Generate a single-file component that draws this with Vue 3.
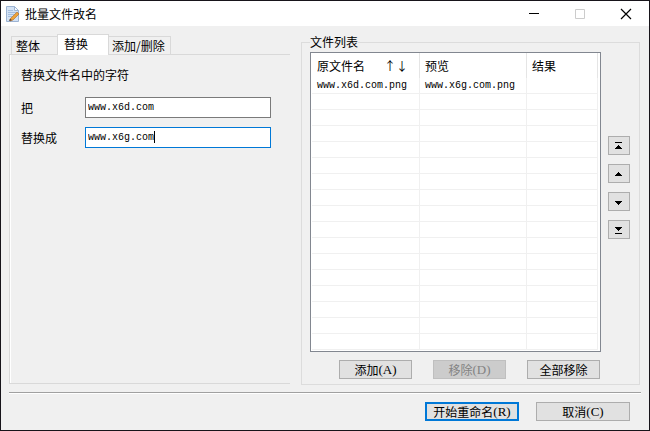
<template>
  <div class="window">
    <header class="titlebar">
      <svg class="app-icon" viewBox="0 0 16 16" width="16" height="16">
        <path d="M1.500 .5h8l4 4v11h-12z" fill="#d3e2f5" stroke="#9db4d3" />
        <path d="M9.500 .5v4h4z" fill="#f8fbff" stroke="#9db4d3" />
        <path d="M3 4.500h5M3 6.500h8M3 8.500h6M3 10.500h4" stroke="#a5bfe0" />
        <path d="M5 13l7-7 2 2-6 6-3 1z" fill="#eda33b" stroke="#a8672b" stroke-width=".6" />
        <path d="M4 15l1-2 2 1z" fill="#4b3a30" />
      </svg>
      <h1>批量文件改名</h1>
      <div class="window-buttons">
        <button aria-label="最小化">
          <svg width="12" height="12" viewBox="0 0 12 12"><path d="M1 5.500h10" stroke="#000" /></svg>
        </button>
        <button aria-label="最大化" disabled>
          <svg width="12" height="12" viewBox="0 0 12 12"><path d="M1.500 1.500h9v9h-9z" fill="none" stroke="#ccc" /></svg>
        </button>
        <button aria-label="关闭">
          <svg width="12" height="12" viewBox="0 0 12 12"><path d="M1 1l10 10M11 1L1 11" stroke="#000" stroke-width="1.200" /></svg>
        </button>
      </div>
    </header>

    <main class="content">
      <section class="left">
        <div class="tabs" role="tablist">
          <button
            v-for="tab in tabs"
            :key="tab.id"
            role="tab"
            class="tab"
            :class="[tab.id, { active: tab.id === current }]"
            :aria-selected="tab.id === current"
            @click="current = tab.id"
          >{{ tab.name }}</button>
        </div>
        <div class="panel">
          <p>替换文件名中的字符</p>
          <div class="field">
            <label for="from">把</label>
            <div class="box"><input id="from" v-model="from" type="text" /></div>
          </div>
          <div class="field">
            <label for="to">替换成</label>
            <div class="box">
              <input id="to" v-model="to" class="focused" type="text" />
              <i class="caret"></i>
            </div>
          </div>
        </div>
      </section>

      <fieldset class="group">
        <legend>文件列表</legend>
        <div class="group-body">
          <div class="files">
            <div class="list">
              <table>
                <thead>
                  <tr>
                    <th class="name">原文件名<span class="sort">↑↓</span></th>
                    <th class="preview">预览</th>
                    <th>结果</th>
                  </tr>
                </thead>
                <tbody>
                  <tr v-for="(row, i) in rows" :key="i">
                    <td>{{ row.name }}</td>
                    <td>{{ row.preview }}</td>
                    <td></td>
                  </tr>
                </tbody>
              </table>
            </div>
            <div class="list-actions">
              <button class="btn">添加<span class="key">(A)</span></button>
              <button class="btn" disabled>移除<span class="key">(D)</span></button>
              <button class="btn">全部移除</button>
            </div>
          </div>
          <div class="order">
            <button v-for="b in orderButtons" :key="b.label" class="btn" :aria-label="b.label">
              <svg width="8" height="8" viewBox="0 0 8 8" shape-rendering="crispEdges"><path :d="b.icon" /></svg>
            </button>
          </div>
        </div>
      </fieldset>
    </main>

    <footer class="footer">
      <button class="btn primary">开始重命名<span class="key">(R)</span></button>
      <button class="btn">取消<span class="key">(C)</span></button>
    </footer>
  </div>
</template>

<script setup>
import { ref, computed } from 'vue';

const tabs = [
  { id: 'whole', name: '整体' },
  { id: 'replace', name: '替换' },
  { id: 'edit', name: '添加/删除' },
];
const current = ref('replace');

const from = ref('www.x6d.com');
const to = ref('www.x6g.com');

const files = ref(['www.x6d.com.png']);

// the list always shows 17 rows, empty ones included
const rows = computed(() =>
  Array.from({ length: 17 }, (_, i) => {
    const name = files.value[i] || '';
    return { name, preview: from.value ? name.replace(from.value, to.value) : name };
  })
);

const orderButtons = [
  { label: '移到顶部', icon: 'M0 0h7v1H0zM3 3h1v1h1v1h1v1h1v1H0V6h1V5h1V4h1z' },
  { label: '上移', icon: 'M3 2h1v1h1v1h1v1h1v1H0V5h1V4h1V3h1z' },
  { label: '下移', icon: 'M0 3h7v1H6v1H5v1H4v1H3V6H2V5H1V4H0z' },
  { label: '移到底部', icon: 'M0 1h7v1H6v1H5v1H4v1H3V4H2V3H1V2H0zM0 7h7v1H0z' },
];
</script>

<style>
body {
  margin: 0;
}
</style>

<style scoped>
.window {
  box-sizing: border-box;
  min-height: 100vh;
  display: flex;
  flex-direction: column;
  border: 1px solid #17141a;
  background: #f0f0f0;
  color: #000;
  font-family: "Noto Sans CJK SC", sans-serif;
  font-size: 12px;
  line-height: 14px;
}

button,
input {
  box-sizing: border-box;
  margin: 0;
  font-family: inherit;
  font-size: 12px;
  line-height: 14px;
  color: #000;
}

.titlebar {
  display: flex;
  align-items: center;
  height: 25px;
  padding-left: 4px;
  background: #fff;
}

.app-icon {
  margin-right: 4px;
}

h1 {
  margin: 0;
  flex: 1;
  font-size: 12px;
  font-weight: normal;
}

.window-buttons {
  display: flex;
}

.window-buttons button {
  display: flex;
  align-items: center;
  justify-content: center;
  width: 46px;
  height: 24px;
  padding: 0;
  border: none;
  background: none;
}

.content {
  display: grid;
  grid-template-columns: 281fr 339fr;
  gap: 11px;
  padding: 8px 9px 7px 8px;
}

.left {
  display: flex;
  flex-direction: column;
  padding-bottom: 1px;
}

.tabs {
  display: flex;
  align-items: flex-end;
  height: 20px;
  padding-left: 2px;
}

.tab {
  height: 18px;
  padding: 0 4px;
  border: 1px solid #d9d9d9;
  border-bottom: none;
  background: #f0f0f0;
  text-align: left;
}

.whole {
  width: 46px;
  border-right: none;
}

.edit {
  width: 62px;
  padding: 0 3px;
  border-left: none;
}

.active {
  z-index: 1;
  width: 52px;
  height: 21px;
  margin-bottom: -1px;
  padding: 0 6px 2px;
  background: #fff;
}

.panel {
  flex: 1;
  padding: 13px 11px;
  border: 1px solid #d9d9d9;
  border-right: none;
  box-shadow: inset 1px 0 #fff;
}

.panel p {
  margin: 0 0 15px;
}

.field {
  display: flex;
  align-items: center;
  margin-bottom: 9px;
}

.field label {
  width: 64px;
}

.box {
  position: relative;
  width: 186px;
}

.box input {
  display: block;
  width: 100%;
  height: 21px;
  padding: 0 2px;
  border: 1px solid #7a7a7a;
  border-radius: 0;
  outline: none;
  background: #fff;
  font-family: "Liberation Mono", monospace;
  font-size: 10px;
}

.box .focused {
  border-color: #0078d7;
}

.caret {
  position: absolute;
  left: 69px;
  top: 4px;
  width: 1px;
  height: 12px;
  background: #000;
}

.group {
  min-width: 0;
  margin: 1px 0 0;
  padding: 3px 9px 5px 8px;
  border: 1px solid #dcdcdc;
}

.group legend {
  padding: 0;
}

.group-body {
  display: flex;
  align-items: center;
  gap: 7px;
}

.files {
  flex: 1;
}

.list {
  padding: 0 2px 1px 1px;
  border: 1px solid #828790;
  background: #fff;
}

table {
  width: 100%;
  table-layout: fixed;
  border-collapse: separate;
  border-spacing: 0;
}

th,
td {
  box-sizing: border-box;
  padding: 0 5px;
  border-right: 1px solid #f0f0f0;
  text-align: left;
  white-space: nowrap;
}

th {
  height: 25px;
  border-color: #e5e5e5;
  font-weight: normal;
}

td {
  height: 16px;
  padding-top: 1px;
  border-bottom: 1px solid #f0f0f0;
  font-family: "Liberation Mono", monospace;
  font-size: 10px;
}

.name {
  width: 108px;
}

.preview {
  width: 107px;
}

.sort {
  margin-left: 19px;
}

.list-actions {
  display: flex;
  justify-content: flex-end;
  gap: 21px;
  padding: 8px 1px 0 0;
}

.btn {
  display: flex;
  align-items: center;
  justify-content: center;
  width: 73px;
  height: 19px;
  padding: 0;
  border: 1px solid #adadad;
  background: #e1e1e1;
}

.btn:disabled {
  border-color: #bfbfbf;
  background: #ccc;
  color: #838383;
}

.key {
  font-family: "Liberation Serif", serif;
  font-size: 13px;
}

.order {
  display: flex;
  flex-direction: column;
  gap: 9px;
  padding-bottom: 56px;
}

.order .btn {
  width: 22px;
}

.footer {
  display: flex;
  justify-content: flex-end;
  gap: 17px;
  margin: 0 8px;
  padding: 9px 11px 9px;
  border-top: 1px solid #a0a0a0;
  box-shadow: inset 0 1px #fff;
}

.footer .btn {
  width: 94px;
}

.footer .primary {
  border: 2px solid #0078d7;
}
</style>
